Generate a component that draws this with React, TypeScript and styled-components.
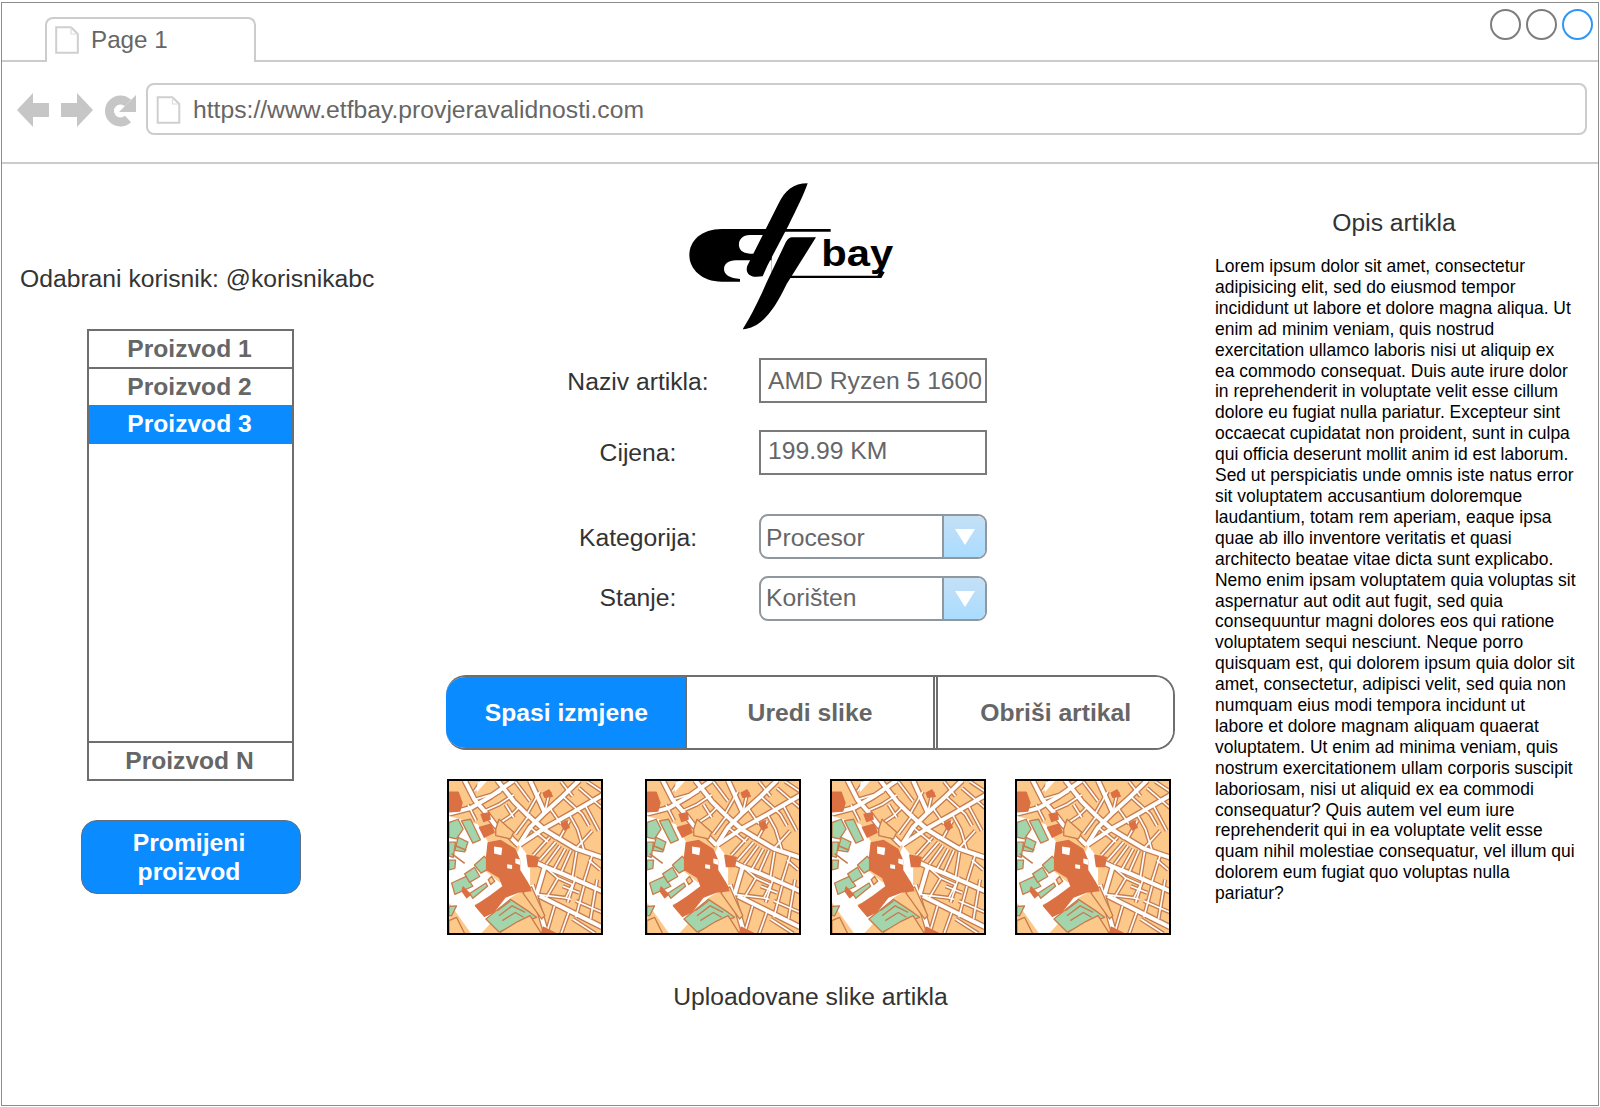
import React from "react";
import styled, { createGlobalStyle } from "styled-components";

const Global = createGlobalStyle`
  html, body { margin: 0; padding: 0; background: #fff; }
  body { font-family: "Liberation Sans", Arial, sans-serif; }
`;

const BLUE = "#0a8bff";
const GREY_TEXT = "#666666";
const DARK_TEXT = "#333333";

const Win = styled.div`
  box-sizing: border-box;
  width: 1598px;
  height: 1104px;
  margin: 2px 1px;
  border: 1px solid #8c8c8c;
  overflow: hidden;
  display: flex;
  flex-direction: column;
`;

const TabStrip = styled.div`
  box-sizing: border-box;
  height: 59px;
  border-bottom: 2px solid #cccccc;
  display: flex;
  justify-content: space-between;
  align-items: flex-start;
  padding: 6px 5px 0 43px;
  flex-shrink: 0;
`;

const Tab = styled.div`
  box-sizing: border-box;
  width: 211px;
  height: 45px;
  margin-top: 8px;
  background: #fff;
  border: 2px solid #cccccc;
  border-bottom: none;
  border-radius: 8px 8px 0 0;
  display: flex;
  align-items: center;
  padding: 0 0 2px 8px;
  gap: 12px;
  color: ${GREY_TEXT};
  font-size: 24.2px;
`;

const Controls = styled.div`
  display: flex;
  gap: 5px;
`;

const Circle = styled.div<{ $active?: boolean }>`
  box-sizing: border-box;
  width: 31px;
  height: 31px;
  border-radius: 50%;
  border: 2px solid ${(p) => (p.$active ? "#2f96f5" : "#7d7d7d")};
`;

const Toolbar = styled.div`
  box-sizing: border-box;
  height: 102px;
  border-bottom: 2px solid #cccccc;
  display: flex;
  align-items: flex-start;
  padding: 21px 11px 0 13px;
  flex-shrink: 0;
`;

const NavIcons = styled.div`
  display: flex;
  align-items: center;
  height: 53px;
  width: 131px;
`;

const UrlBar = styled.div`
  box-sizing: border-box;
  flex: 1;
  height: 52px;
  border: 2px solid #cccccc;
  border-radius: 8px;
  display: flex;
  align-items: center;
  gap: 12px;
  padding: 2px 0 0 8px;
  color: ${GREY_TEXT};
  font-size: 24.7px;
`;

const Content = styled.div`
  flex: 1;
  display: grid;
  grid-template-columns: 444px 729px 1fr;
`;

const LeftCol = styled.div`
  display: flex;
  flex-direction: column;
  padding-top: 100px;
`;

const UserLabel = styled.div`
  margin-left: 18px;
  font-size: 24.7px;
  line-height: 30px;
  color: ${DARK_TEXT};
  white-space: nowrap;
`;

const ProductList = styled.div`
  box-sizing: border-box;
  width: 207px;
  height: 452px;
  margin: 35px 0 0 85px;
  border: 2px solid #6e6e6e;
  display: flex;
  flex-direction: column;
`;

const Product = styled.div<{ $selected?: boolean; $divider?: boolean }>`
  height: ${(p) => (p.$selected ? "39px" : "36px")};
  line-height: ${(p) => (p.$selected ? "38px" : "36px")};
  padding-right: 2px;
  text-align: center;
  font-weight: 700;
  font-size: 24.6px;
  color: ${(p) => (p.$selected ? "#fff" : GREY_TEXT)};
  background: ${(p) => (p.$selected ? BLUE : "transparent")};
  border-bottom: ${(p) => (p.$divider ? "2px solid #6e6e6e" : "none")};
`;

const ListSpacer = styled.div`
  flex: 1;
  border-bottom: 2px solid #6e6e6e;
`;

const ChangeButton = styled.div`
  box-sizing: border-box;
  width: 220px;
  height: 74px;
  margin: 39px 0 0 79px;
  padding-right: 4px;
  background: ${BLUE};
  border: 1.5px solid #5f6f80;
  border-radius: 16px;
  color: #fff;
  font-weight: 700;
  font-size: 24.7px;
  line-height: 29px;
  display: flex;
  align-items: center;
  justify-content: center;
  text-align: center;
`;

const CenterCol = styled.div`
  display: flex;
  flex-direction: column;
`;

const LogoWrap = styled.div`
  height: 147px;
  margin: 19px 0 28px 214px;
`;

const FormRow = styled.div<{ $top: number }>`
  display: flex;
  align-items: center;
  margin-top: ${(p) => p.$top}px;
  padding-left: 111px;
  gap: 41px;
`;

const FieldLabel = styled.div<{ $nudge?: number }>`
  width: 160px;
  text-align: center;
  font-size: 24.7px;
  color: ${DARK_TEXT};
  white-space: nowrap;
  transform: translate(1px, ${(p) => p.$nudge ?? 0}px);
`;

const TextField = styled.div<{ $h: number; $shift?: number }>`
  box-sizing: border-box;
  width: 228px;
  height: ${(p) => p.$h}px;
  border: 2px solid #7a7a7a;
  padding: 0 0 ${(p) => p.$shift ?? 0}px 7px;
  margin-left: 1px;
  display: flex;
  align-items: center;
  font-size: 24.7px;
  color: ${GREY_TEXT};
  white-space: nowrap;
`;

const Select = styled.div`
  box-sizing: border-box;
  width: 228px;
  height: 45px;
  margin-left: 1px;
  border: 2px solid #8f979f;
  border-radius: 9px;
  display: flex;
  overflow: hidden;
  font-size: 24.7px;
  color: ${GREY_TEXT};
`;

const SelectValue = styled.div<{ $nudge?: number }>`
  flex: 1;
  display: flex;
  align-items: center;
  padding-left: 5px;
  padding-top: ${(p) => Math.max(p.$nudge ?? 0, 0) * 2}px;
  padding-bottom: ${(p) => Math.max(-(p.$nudge ?? 0), 0) * 2}px;
`;

const SelectArrow = styled.div`
  box-sizing: border-box;
  width: 43px;
  border-left: 2px solid #8f979f;
  background: linear-gradient(180deg, #c4e0f6 0%, #aadcff 100%);
  display: flex;
  align-items: center;
  justify-content: center;
`;

const ButtonGroup = styled.div`
  box-sizing: border-box;
  height: 75px;
  margin: 54px 0 0 0;
  width: 729px;
  border: 2px solid #6e6e6e;
  border-left: none;
  border-radius: 20px;
  display: flex;
  overflow: hidden;
`;

const GroupButton = styled.div<{ $primary?: boolean; $w: number }>`
  box-sizing: border-box;
  width: ${(p) => p.$w}px;
  display: flex;
  align-items: center;
  justify-content: center;
  padding-left: ${(p) => (p.$primary ? "2px" : "0")};
  font-weight: 700;
  font-size: 24.7px;
  color: ${(p) => (p.$primary ? "#fff" : GREY_TEXT)};
  background: ${(p) => (p.$primary ? BLUE : "#fff")};
  border-right: ${(p) => (p.$primary ? "2px solid #6e6e6e" : "none")};
  margin: ${(p) => (p.$primary ? "-2px 0" : "0")};
`;

const GroupDivider = styled.div`
  width: 5px;
  box-sizing: border-box;
  border-left: 2px solid #6e6e6e;
  border-right: 2px solid #6e6e6e;
  background: #fff;
  flex-shrink: 0;
`;

const Gallery = styled.div`
  display: flex;
  margin: 29px 0 0 1px;
`;

const Thumb = styled.div<{ $left: number }>`
  box-sizing: border-box;
  width: 156px;
  height: 156px;
  margin-left: ${(p) => p.$left}px;
  border: 2px solid #000;
  flex-shrink: 0;
  overflow: hidden;
  background: #fff;
`;

const MapSvg = styled.svg`
  display: block;
  filter: blur(0.4px);
`;

const Caption = styled.div`
  margin-top: 48px;
  text-align: center;
  font-size: 24.7px;
  line-height: 28px;
  color: ${DARK_TEXT};
  width: 729px;
`;

const RightCol = styled.div`
  padding: 45px 0 0 40px;
`;

const SideTitle = styled.div`
  width: 358px;
  text-align: center;
  font-size: 24.7px;
  line-height: 28px;
  color: ${DARK_TEXT};
`;

const Description = styled.div`
  margin-top: 19px;
  font-size: 17.45px;
  line-height: 20.9px;
  color: #000;
  white-space: nowrap;
`;

const DescLine = styled.div``;

const LINES = [
  "Lorem ipsum dolor sit amet, consectetur",
  "adipisicing elit, sed do eiusmod tempor",
  "incididunt ut labore et dolore magna aliqua. Ut",
  "enim ad minim veniam, quis nostrud",
  "exercitation ullamco laboris nisi ut aliquip ex",
  "ea commodo consequat. Duis aute irure dolor",
  "in reprehenderit in voluptate velit esse cillum",
  "dolore eu fugiat nulla pariatur. Excepteur sint",
  "occaecat cupidatat non proident, sunt in culpa",
  "qui officia deserunt mollit anim id est laborum.",
  "Sed ut perspiciatis unde omnis iste natus error",
  "sit voluptatem accusantium doloremque",
  "laudantium, totam rem aperiam, eaque ipsa",
  "quae ab illo inventore veritatis et quasi",
  "architecto beatae vitae dicta sunt explicabo.",
  "Nemo enim ipsam voluptatem quia voluptas sit",
  "aspernatur aut odit aut fugit, sed quia",
  "consequuntur magni dolores eos qui ratione",
  "voluptatem sequi nesciunt. Neque porro",
  "quisquam est, qui dolorem ipsum quia dolor sit",
  "amet, consectetur, adipisci velit, sed quia non",
  "numquam eius modi tempora incidunt ut",
  "labore et dolore magnam aliquam quaerat",
  "voluptatem. Ut enim ad minima veniam, quis",
  "nostrum exercitationem ullam corporis suscipit",
  "laboriosam, nisi ut aliquid ex ea commodi",
  "consequatur? Quis autem vel eum iure",
  "reprehenderit qui in ea voluptate velit esse",
  "quam nihil molestiae consequatur, vel illum qui",
  "dolorem eum fugiat quo voluptas nulla",
  "pariatur?",
];

const DocIcon = ({ w, h }: { w: number; h: number }) => (
  <svg width={w} height={h} viewBox="0 0 24 28" style={{ flexShrink: 0 }}>
    <path d="M1.2 1.2H16L22.8 8V26.8H1.2Z" fill="#fff" stroke="#cfcfcf" strokeWidth="2" />
    <path d="M16 1.2V8H22.8" fill="none" stroke="#dcdcdc" strokeWidth="1.2" />
  </svg>
);

const NavGlyphs = () => (
  <svg width="122" height="36" viewBox="0 0 122 36">
    <path d="M2 18L18 1V11H34V25H18V35Z" fill="#c6c6c6" />
    <path d="M78 18L62 1V11H46V25H62V35Z" fill="#c6c6c6" />
    <path d="M113 11A11 11 0 1 0 113 27" fill="none" stroke="#c6c6c6" strokeWidth="9" />
    <path d="M121 3V20H104Z" fill="#c6c6c6" />
  </svg>
);

const Logo = () => (
  <svg width="260" height="147" viewBox="0 42 780 441">
    <path d="M185 180H335V338H185C125 338 88 300 88 258C88 215 125 180 185 180Z" fill="#000" />
    <path d="M335 198H270C245 198 235 215 237 230C239 246 252 254 280 254H335Z" fill="#fff" />
    <path d="M335 274H228C205 274 192 285 192 300C192 318 210 328 240 330H335Z" fill="#fff" />
    <rect x="240" y="330" width="100" height="12" fill="#fff" />
    <path d="M300 180H512V188H300Z" fill="#000" />
    <path d="M330 320H652L662 304L674 310L664 327H330Z" fill="#000" />
    <path d="M443 43C400 43 375 65 355 105L262 290C255 310 268 324 290 323L308 322L322 290L385 170C410 120 430 80 443 43Z" fill="#000" />
    <path d="M395 205H468L380 345C340 430 300 478 248 481C280 430 300 385 320 340L378 218C385 208 390 205 395 205Z" fill="#000" />
    <text x="484" y="290" fontFamily="'Liberation Sans', Arial, sans-serif" fontWeight="700" fontSize="108" textLength="216" lengthAdjust="spacingAndGlyphs" fill="#000">bay</text>
  </svg>
);

const WIDE: string[] = [
  "52,128 120,110 180,75 250,26",
  "100,26 130,85 165,125 195,165 235,195 265,225",
  "265,225 300,170 345,125 400,75 450,26",
  "340,175 390,205 440,235 520,262",
  "265,225 340,175 420,130 520,72",
  "200,26 250,90 290,130 340,175",
  "300,26 345,125",
  "300,270 345,290 400,312 520,365",
  "305,345 350,495",
  "345,290 320,375",
  "330,380 420,425 520,475",
];
const THIN: string[] = [
  "130,85 180,70", "160,120 205,100 250,70", "195,165 240,135 270,105", "255,190 300,130",
  "300,170 355,215", "325,155 380,205", "400,75 460,130 480,165", "360,110 395,160",
  "450,50 520,110", "475,30 520,60", "395,30 430,75", "345,125 360,60",
  "420,130 445,175 465,240", "470,105 510,180", "390,205 420,150", "440,235 490,180",
  "310,255 360,200", "330,270 378,215", "350,283 392,225", "372,300 408,235", "395,308 425,240",
  "430,320 442,245", "465,335 490,255",
  "345,290 385,325 430,345 410,385", "320,375 405,385 425,390", "385,325 350,385",
  "440,320 415,400", "375,410 350,495", "420,425 395,495", "465,350 440,445", "440,395 520,430",
  "505,330 485,450", "430,450 500,495",
  "150,30 130,60", "210,60 165,85", "255,30 300,90", "330,60 290,130",
  "110,100 135,150", "225,100 250,140", "480,270 515,300", "400,350 450,370",
];
const WHITE_PATCHES: string[] = [
  "52,135 140,160 172,215 160,300 215,345 195,385 130,405 165,445 150,495 120,495 52,400",
  "270,225 300,265 300,345 275,365 240,385 200,440 150,495 160,380 230,320",
  "140,30 170,26 135,65",
];
const GREEN: string[] = [
  "60,340 105,320 125,350 70,375","100,312 130,292 146,320 115,338","130,285 160,258 185,290 150,310",
  "115,372 165,340 170,350 125,387","52,412 75,410 60,440 52,440","165,450 240,390 300,430 320,445 250,470 205,490",
  "90,150 118,145 148,208 125,218","52,155 80,145 95,175 75,205 52,200","52,270 72,270 70,295 52,300",
  "80,200 110,215 100,245 70,240","52,215 72,215 65,262 52,258",
];
const LIGHT: string[] = [
  "172,330 182,320 192,335 180,345","210,490 262,458 300,440 335,495 210,495",
  "278,370 305,352 345,440 335,450","52,455 75,445 100,495 52,495",
  "195,175 205,145 250,185 240,205 195,195",
];
const DARK: string[] = [
  "52,62 80,62 92,95 85,120 52,122","150,130 175,125 178,145 158,152","340,65 358,55 368,75 345,78",
  "395,160 410,150 420,170 405,178","145,170 180,160 190,185 160,200","290,255 325,262 320,290 295,290",
  "340,475 380,495 335,495","95,352 118,375 106,385 92,365",
];

const MapTile = () => (
  <MapSvg width="152" height="152" viewBox="52 28 465 465" preserveAspectRatio="none">
    <rect x="52" y="28" width="465" height="465" fill="#fdc98b" />
    <g fill="none" strokeLinejoin="round">
      {THIN.map((p) => (
        <polyline key={p} points={p} stroke="#c67c4d" strokeWidth="13" />
      ))}
      {WIDE.map((p) => (
        <polyline key={p} points={p} stroke="#c67c4d" strokeWidth="20" />
      ))}
      {THIN.map((p) => (
        <polyline key={p} points={p} stroke="#fff" strokeWidth="5" />
      ))}
      {WIDE.map((p) => (
        <polyline key={p} points={p} stroke="#fff" strokeWidth="12" />
      ))}
    </g>
    {WHITE_PATCHES.map((p) => (
      <polygon key={p} points={p} fill="#fff" />
    ))}
    <g strokeWidth="4" strokeLinejoin="round">
      {GREEN.map((p) => (
        <polygon key={p} points={p} fill="#a3d5ac" stroke="#c67c4d" />
      ))}
      {LIGHT.map((p) => (
        <polygon key={p} points={p} fill="#fdc98b" stroke="#c67c4d" />
      ))}
      {DARK.map((p) => (
        <polygon key={p} points={p} fill="#db7043" stroke="#db7043" />
      ))}
    </g>
    <path
      d="M170 215L210 208L255 235L270 270L270 300L295 340L305 365L265 370L225 385L190 430L160 445L130 410L175 380L215 350L205 325L165 300L165 260Z"
      fill="#db7043"
    />
    <path d="M190 228L215 232L212 255L190 250ZM230 283L245 285L245 297L230 295ZM255 265L270 268L270 285L255 280Z" fill="#fff" />
    <path d="M205 440L245 410L285 430M215 455L255 430L280 445M200 425L240 395" fill="none" stroke="#c67c4d" strokeWidth="4" />
    <path d="M70 225L105 240M60 250L100 280" fill="none" stroke="#c67c4d" strokeWidth="5" />
  </MapSvg>
);

const Caret = () => (
  <svg width="22" height="18" viewBox="0 0 22 18">
    <path d="M1 1H21L11 17Z" fill="#fff" />
  </svg>
);

export default function App() {
  return (
    <>
      <Global />
      <Win>
        <TabStrip>
          <Tab>
            <DocIcon w={24} h={28} />
            Page 1
          </Tab>
          <Controls>
            <Circle />
            <Circle />
            <Circle $active />
          </Controls>
        </TabStrip>
        <Toolbar>
          <NavIcons>
            <NavGlyphs />
          </NavIcons>
          <UrlBar>
            <DocIcon w={25} h={28} />
            https://www.etfbay.provjeravalidnosti.com
          </UrlBar>
        </Toolbar>
        <Content>
          <LeftCol>
            <UserLabel>Odabrani korisnik: @korisnikabc</UserLabel>
            <ProductList>
              <Product $divider>Proizvod 1</Product>
              <Product>Proizvod 2</Product>
              <Product $selected>Proizvod 3</Product>
              <ListSpacer />
              <Product>Proizvod N</Product>
            </ProductList>
            <ChangeButton>
              Promijeni
              <br />
              proizvod
            </ChangeButton>
          </LeftCol>
          <CenterCol>
            <LogoWrap>
              <Logo />
            </LogoWrap>
            <FormRow $top={0}>
              <FieldLabel $nudge={1}>Naziv artikla:</FieldLabel>
              <TextField $h={45}>AMD Ryzen 5 1600</TextField>
            </FormRow>
            <FormRow $top={27}>
              <FieldLabel>Cijena:</FieldLabel>
              <TextField $h={45} $shift={4}>199.99 KM</TextField>
            </FormRow>
            <FormRow $top={39}>
              <FieldLabel $nudge={1}>Kategorija:</FieldLabel>
              <Select>
                <SelectValue $nudge={1}>Procesor</SelectValue>
                <SelectArrow>
                  <Caret />
                </SelectArrow>
              </Select>
            </FormRow>
            <FormRow $top={17}>
              <FieldLabel $nudge={-1}>Stanje:</FieldLabel>
              <Select>
                <SelectValue $nudge={-1}>Korišten</SelectValue>
                <SelectArrow>
                  <Caret />
                </SelectArrow>
              </Select>
            </FormRow>
            <ButtonGroup>
              <GroupButton $primary $w={241}>Spasi izmjene</GroupButton>
              <GroupButton $w={247}>Uredi slike</GroupButton>
              <GroupDivider />
              <GroupButton $w={235}>Obriši artikal</GroupButton>
            </ButtonGroup>
            <Gallery>
              {[0, 42, 29, 29].map((left, i) => (
                <Thumb key={i} $left={left}>
                  <MapTile />
                </Thumb>
              ))}
            </Gallery>
            <Caption>Uploadovane slike artikla</Caption>
          </CenterCol>
          <RightCol>
            <SideTitle>Opis artikla</SideTitle>
            <Description>
              {LINES.map((l) => (
                <DescLine key={l}>{l}</DescLine>
              ))}
            </Description>
          </RightCol>
        </Content>
      </Win>
    </>
  );
}
